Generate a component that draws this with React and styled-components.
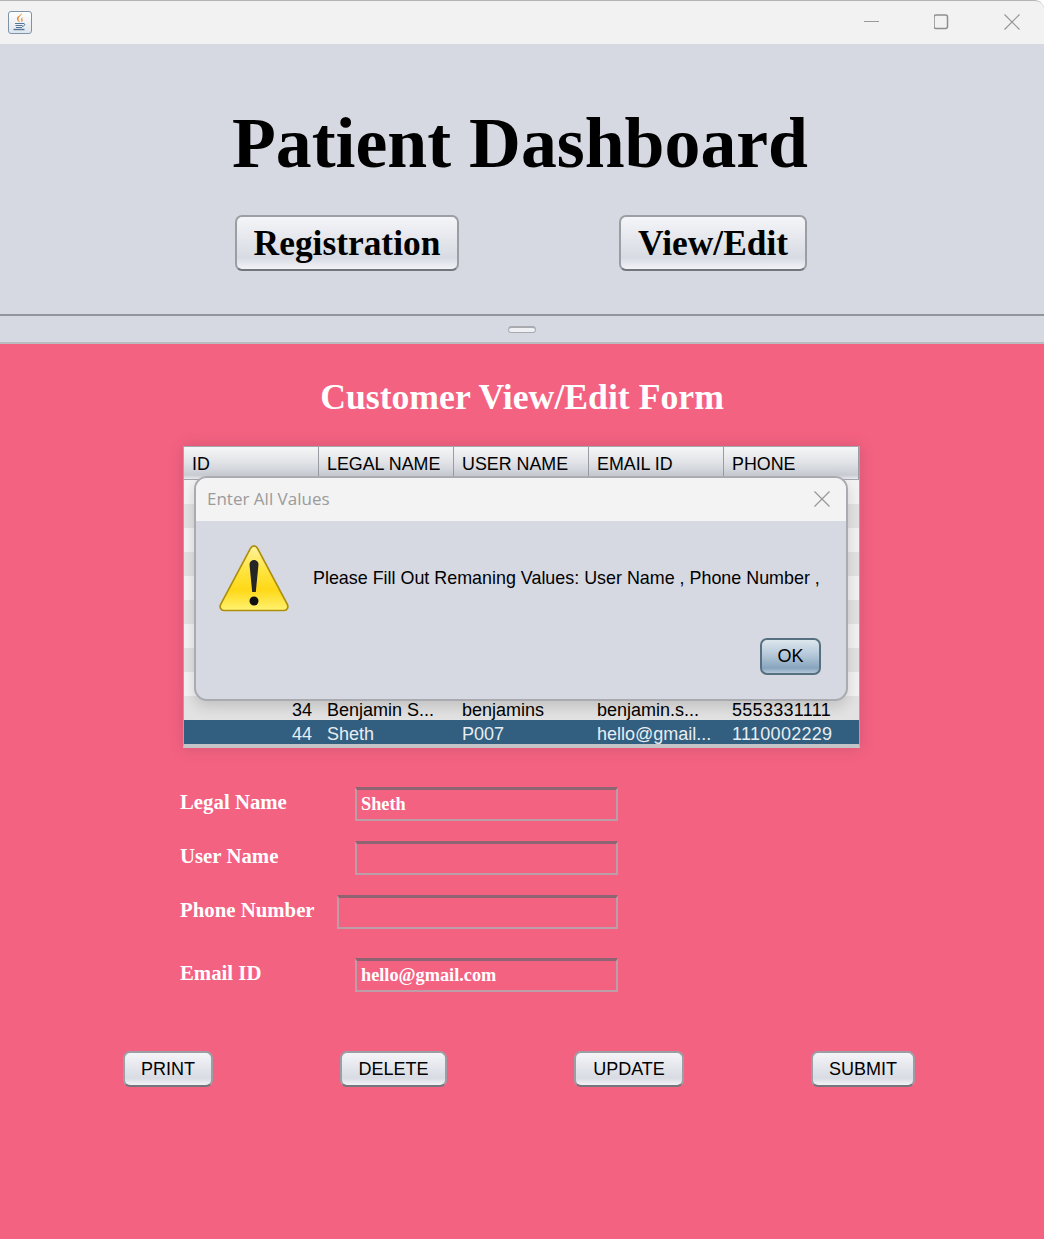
import React from 'react';
import styled, { createGlobalStyle } from 'styled-components';

const GlobalStyle = createGlobalStyle`
html, body {
  margin: 0;
  padding: 0;
  background: #ffffff;
}
* {
  box-sizing: border-box;
}
`

const Window = styled.div`
width: 1044px;
height: 1239px;
display: flex;
flex-direction: column;
overflow: hidden;
font-family: "Liberation Sans", Arial, sans-serif;
`

const TitleBar = styled.div`
height: 44px;
flex: none;
display: flex;
align-items: center;
justify-content: space-between;
padding: 0 24px 0 8px;
background: #f2f2f2;
border-top: 1px solid #b4b4b4;
border-top-right-radius: 9px;
`

const AppIcon = styled.div`
width: 24px;
height: 23px;
display: flex;
align-items: center;
justify-content: center;
border: 1px solid #7d93a8;
border-radius: 3px;
background: linear-gradient(#ffffff, #dfe5ec);
`

const WindowControls = styled.div`
display: flex;
align-items: center;
gap: 54px;
margin-top: -2px;
`

const TopPanel = styled.header`
height: 270px;
flex: none;
display: flex;
flex-direction: column;
align-items: center;
background: #d6d9e2;
`

const MainTitle = styled.h1`
margin: 58px 4px 0 0;
font-family: "Liberation Serif", "Times New Roman", serif;
font-weight: 700;
font-size: 71.75px;
line-height: 82px;
color: #000000;
`

const TopButtons = styled.div`
display: flex;
gap: 160px;
margin: 31px 2px 0 0;
`

const JavaButton = styled.button`
height: ${props => props.$height}px;
width: ${props => props.$width}px;
padding: 0;
font-family: ${props => props.$serif ? '"Liberation Serif", "Times New Roman", serif' : '"Liberation Sans", Arial, sans-serif'};
font-weight: ${props => props.$serif ? 700 : 400};
font-size: ${props => props.$serif ? 35.4 : 18}px;
color: #000000;
background: linear-gradient(#f4f5f8 0%, #e4e6ec 45%, #d8dbe3 78%, #f1f3f6 100%);
border: 2px solid #9c9ea5;
border-bottom: 2px solid #74767d;
border-radius: 7px;
`

const Divider = styled.div`
height: 30px;
flex: none;
display: flex;
align-items: center;
justify-content: center;
background: #d6d9e2;
border-top: 2px solid #92949c;
border-bottom: 2px solid #b9bbc1;
`

const Grip = styled.div`
width: 28px;
height: 7px;
margin-left: -1px;
border: 1px solid #a8aab0;
border-top-width: 2px;
border-radius: 4px;
background: #eef0f4;
`

const FormPanel = styled.main`
flex: 1;
display: flex;
flex-direction: column;
background: #f46282;
`

const FormTitle = styled.h2`
margin: 33px 0 0;
text-align: center;
font-family: "Liberation Serif", "Times New Roman", serif;
font-weight: 700;
font-size: 35.7px;
line-height: 40px;
color: #ffffff;
`

const TableArea = styled.div`
position: relative;
width: 677px;
margin: 29px 0 0 183px;
background: #e6e6e6;
border: 1px solid #a4a6ad;
border-bottom: 4px solid #c3c3c8;
box-shadow: 0 0 14px rgba(90, 40, 60, 0.22);
`

const Row = styled.div`
display: grid;
grid-template-columns: repeat(5, 135px);
height: ${props => props.$height || 24}px;
font-size: 18px;
line-height: 28px;
color: ${props => props.$selected ? '#e8edf2' : '#000000'};
background: ${props => props.$selected ? '#325f80' : props.$alt ? '#e2e2e2' : '#f2f2f2'};
`

const HeaderRow = styled(Row)`
height: 33px;
font-size: 17.85px;
line-height: 24px;
color: #000000;
background: linear-gradient(#f5f6f7 0%, #e2e4e8 45%, #c9ccd3 88%, #e9ebee 100%);
border-bottom: 1px solid #a4a6ad;
`

const HeaderCell = styled.div`
padding: 5px 0 0 8px;
border-right: 1px solid #9a9ca3;
`

const Cell = styled.div`
padding: 0 ${props => props.$right ? '7px' : '0'} 0 ${props => props.$right ? '0' : '8px'};
text-align: ${props => props.$right ? 'right' : 'left'};
letter-spacing: ${props => props.$spaced ? '0.3px' : '0'};
white-space: nowrap;
`

const Dialog = styled.div`
position: absolute;
left: 10px;
top: 29px;
width: 654px;
height: 225px;
display: flex;
flex-direction: column;
overflow: hidden;
background: #d6d9e2;
border: 2px solid #a9abb0;
border-radius: 13px;
box-shadow: 0 6px 14px rgba(0, 0, 0, 0.14);
`

const DialogTitleBar = styled.div`
height: 43px;
flex: none;
display: flex;
align-items: center;
justify-content: space-between;
padding: 0 16px 2px 11px;
background: #f3f3f3;
font-family: "Open Sans", "Noto Sans", sans-serif;
font-size: 17px;
color: #9b9b9b;
`

const DialogBody = styled.div`
display: flex;
align-items: center;
gap: 24px;
padding: 23px 0 0 23px;
font-size: 17.9px;
color: #000000;
`

const DialogMessage = styled.div`
white-space: nowrap;
`

const DialogFooter = styled.div`
display: flex;
justify-content: flex-end;
padding: 26px 25px 0 0;
`

const OkButton = styled.button`
width: 61px;
height: 37px;
padding: 0;
font-family: "Liberation Sans", Arial, sans-serif;
font-size: 18px;
color: #000000;
background: linear-gradient(#dde6ee 0%, #b5c8d9 45%, #87a4bd 85%, #b4c7d8 100%);
border: 2px solid #56707f;
border-radius: 7px;
`

const Fields = styled.div`
display: flex;
flex-direction: column;
margin: 39px 0 0 180px;
`

const FieldRow = styled.div`
display: flex;
margin-bottom: ${props => props.$gap}px;
`

const FieldLabel = styled.label`
width: ${props => props.$width}px;
flex: none;
font-family: "Liberation Serif", "Times New Roman", serif;
font-weight: 700;
font-size: 20.8px;
line-height: 30px;
color: #ffffff;
`

const FieldInput = styled.input`
width: ${props => props.$width}px;
height: 34px;
padding: 0 0 0 4px;
outline: none;
font-family: "Liberation Serif", "Times New Roman", serif;
font-weight: 700;
font-size: 18.3px;
color: #ffffff;
background: #f46282;
border: 2px solid #bb9ea8;
border-top: 3px solid #8f6472;
`

const ActionRow = styled.div`
display: flex;
gap: 127px;
margin: 59px 0 0 123px;
`

const JavaIcon = () => (
    <svg width="20" height="19" viewBox="0 0 20 19" fill="none">
        <path d="M11.500 0c1 2.500-3.500 3.500-3 6.500.3 1.300 1.200 2 1.500 3-1.500-.8-3.500-2.200-3-4.500.5-2 3.800-2.500 4.500-5z" fill="#e8852c" />
        <path d="M13.500 3.500c-2 1.200-3.500 2.200-2.300 4 .4.600.2 1.200-.2 1.700 1.800-.7 2.500-1.800 1.500-3-.6-.8-.1-1.700 1-2.700z" fill="#f0a060" />
        <path d="M5 10.500h8M5.500 12.500h7M6 14.500h6" stroke="#54769a" strokeWidth="1.200" />
        <path d="M13 10.500c2.500-.5 2.500 2.500-.8 3" stroke="#54769a" strokeWidth="1" />
        <path d="M3.500 16.500h11" stroke="#54769a" strokeWidth="1.400" />
    </svg>
)

const MinimizeIcon = () => (
    <svg width="16" height="16" viewBox="0 0 16 16">
        <path d="M0 7.500h15" stroke="#9a9a9a" strokeWidth="1" />
    </svg>
)

const MaximizeIcon = () => (
    <svg width="16" height="16" viewBox="0 0 16 16" fill="none">
        <rect x="0" y="1" width="13.500" height="13.500" rx="2" stroke="#8e8e8e" strokeWidth="1.500" />
    </svg>
)

const CloseIcon = ({ size }) => (
    <svg width={size} height={size} viewBox="0 0 16 16">
        <path d="M.5.5l15 15M15.500.5l-15 15" stroke="#969696" strokeWidth="1.200" />
    </svg>
)

const WarningIcon = () => (
    <svg width="70" height="68" viewBox="0 0 70 68" style={{ flex: 'none' }}>
        <defs>
            <linearGradient id="warnFill" x1="0" y1="0" x2="0" y2="1">
                <stop offset="0" stopColor="#fff2a0" />
                <stop offset="0.35" stopColor="#ffe545" />
                <stop offset="0.68" stopColor="#ffd917" />
                <stop offset="1" stopColor="#fff272" />
            </linearGradient>
        </defs>
        <path d="M35 1.800c1.600 0 2.600 1 3.400 2.400l29.800 56c1.500 3 .2 6.300-3.200 6.300H5c-3.400 0-4.700-3.300-3.200-6.300l29.800-56C32.400 2.800 33.400 1.800 35 1.800z" fill="url(#warnFill)" stroke="#ad8f0c" strokeWidth="1.700" />
        <path d="M30.500 20.500c0-6 9-6 9 0L36.800 48h-3.600z" fill="#262626" />
        <circle cx="35" cy="57" r="4.500" fill="#111111" />
    </svg>
)

const columns = ['ID', 'LEGAL NAME', 'USER NAME', 'EMAIL ID', 'PHONE']

const rows = [
    {}, {}, {}, {}, {}, {}, {}, {}, {},
    { id: 34, legal: 'Benjamin S...', user: 'benjamins', email: 'benjamin.s...', phone: '5553331111' },
    { id: 44, legal: 'Sheth', user: 'P007', email: 'hello@gmail...', phone: '1110002229', selected: true },
]

const fields = [
    { label: 'Legal Name', value: 'Sheth', labelWidth: 175, inputWidth: 263, gap: 20 },
    { label: 'User Name', value: '', labelWidth: 175, inputWidth: 263, gap: 20 },
    { label: 'Phone Number', value: '', labelWidth: 157, inputWidth: 281, gap: 29 },
    { label: 'Email ID', value: 'hello@gmail.com', labelWidth: 175, inputWidth: 263, gap: 0 },
]

const actions = [
    { label: 'PRINT', width: 90 },
    { label: 'DELETE', width: 107 },
    { label: 'UPDATE', width: 110 },
    { label: 'SUBMIT', width: 104 },
]

const App = () => {
    return (
        <Window>
            <GlobalStyle />
            <TitleBar>
                <AppIcon><JavaIcon /></AppIcon>
                <WindowControls>
                    <MinimizeIcon />
                    <MaximizeIcon />
                    <CloseIcon size={16} />
                </WindowControls>
            </TitleBar>

            <TopPanel>
                <MainTitle>Patient Dashboard</MainTitle>
                <TopButtons>
                    <JavaButton $serif $width={224} $height={56}>Registration</JavaButton>
                    <JavaButton $serif $width={188} $height={56}>View/Edit</JavaButton>
                </TopButtons>
            </TopPanel>

            <Divider><Grip /></Divider>

            <FormPanel>
                <FormTitle>Customer View/Edit Form</FormTitle>

                <TableArea>
                    <HeaderRow>
                        {columns.map(name => <HeaderCell key={name}>{name}</HeaderCell>)}
                    </HeaderRow>
                    {rows.map((row, i) => (
                        <Row key={i} $alt={i % 2 === 1} $selected={row.selected}>
                            <Cell $right>{row.id}</Cell>
                            <Cell>{row.legal}</Cell>
                            <Cell>{row.user}</Cell>
                            <Cell>{row.email}</Cell>
                            <Cell $spaced>{row.phone}</Cell>
                        </Row>
                    ))}

                    <Dialog>
                        <DialogTitleBar>
                            Enter All Values
                            <CloseIcon size={16} />
                        </DialogTitleBar>
                        <DialogBody>
                            <WarningIcon />
                            <DialogMessage>Please Fill Out Remaning Values: User Name , Phone Number ,</DialogMessage>
                        </DialogBody>
                        <DialogFooter>
                            <OkButton>OK</OkButton>
                        </DialogFooter>
                    </Dialog>
                </TableArea>

                <Fields>
                    {fields.map(field => (
                        <FieldRow key={field.label} $gap={field.gap}>
                            <FieldLabel $width={field.labelWidth}>{field.label}</FieldLabel>
                            <FieldInput $width={field.inputWidth} value={field.value} readOnly />
                        </FieldRow>
                    ))}
                </Fields>

                <ActionRow>
                    {actions.map(action => (
                        <JavaButton key={action.label} $width={action.width} $height={36}>{action.label}</JavaButton>
                    ))}
                </ActionRow>
            </FormPanel>
        </Window>
    );
};

export default App;
